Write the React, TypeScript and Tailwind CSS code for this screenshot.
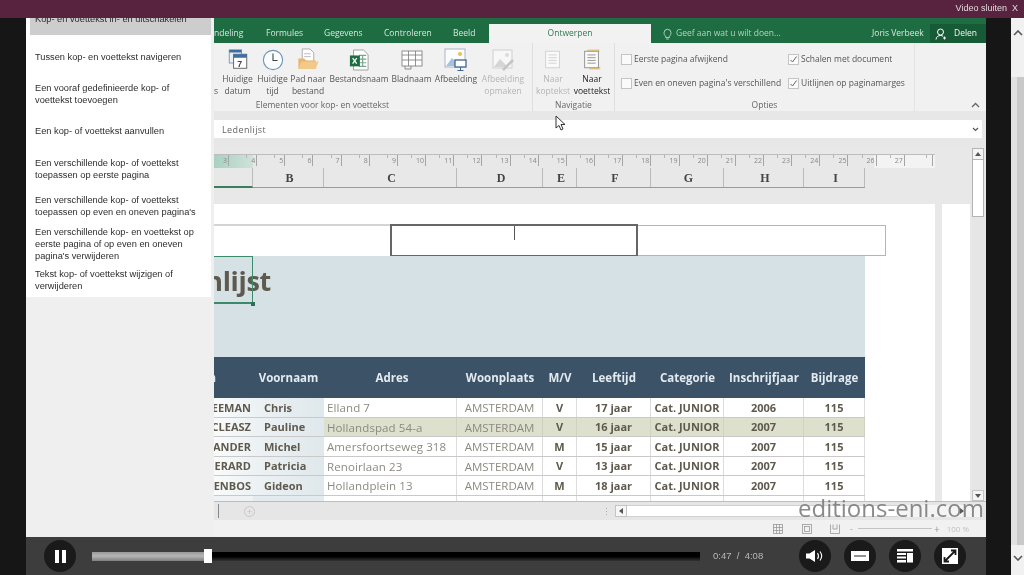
import React from "react";

const sidebarItems: { t: string[]; h: string; active?: boolean }[] = [
  { t: ["Kop- en voettekst in- en uitschakelen"], h: "h-[34px] -mt-[17px]", active: true },
  { t: ["Tussen kop- en voettekst navigeren"], h: "h-[42px]" },
  { t: ["Een vooraf gedefinieerde kop- of", "voettekst toevoegen"], h: "h-[32px]" },
  { t: ["Een kop- of voettekst aanvullen"], h: "h-[42px]" },
  { t: ["Een verschillende kop- of voettekst", "toepassen op eerste pagina"], h: "h-[34px]" },
  { t: ["Een verschillende kop- of voettekst", "toepassen op even en oneven pagina's"], h: "h-[40px]" },
  { t: ["Een verschillende kop- en voettekst op", "eerste pagina of op even en oneven", "pagina's verwijderen"], h: "h-[36px]" },
  { t: ["Tekst kop- of voettekst wijzigen of", "verwijderen"], h: "h-[36px]" },
];

const cols = [
  ["B", "w-[71px]"],
  ["C", "w-[133px]"],
  ["D", "w-[86px]"],
  ["E", "w-[34px]"],
  ["F", "w-[74px]"],
  ["G", "w-[73px]"],
  ["H", "w-[80px]"],
  ["I", "w-[61px]"],
];

const rows = [
  ["VREEMAN", "Chris", "Elland 7", "V", "17 jaar", "2006"],
  ["NICLEASZ", "Pauline", "Hollandspad 54-a", "V", "16 jaar", "2007"],
  ["VANDER", "Michel", "Amersfoortseweg 318", "M", "15 jaar", "2007"],
  ["GERARD", "Patricia", "Renoirlaan 23", "V", "13 jaar", "2007"],
  ["RIJENBOS", "Gideon", "Hollandplein 13", "M", "18 jaar", "2007"],
];

const grid = "grid grid-cols-[39px_71px_133px_86px_34px_74px_73px_80px_61px]";
const rulerNums = [3,4,5,6,7,8,9,10,11,12,13,14,15,16,17,18,19,20,21,22,23,24,25,26,27,0];

function Doc({ color, accent }: { color: string; accent?: string }) {
  return (
    <svg width="22" height="23" viewBox="0 0 24 24" fill="none">
      {accent && <path d="M7 1h13v3h-13zM9 20h12v3h-12z" fill={accent} />}
      <rect x="4" y="3" width="15" height="18" fill="#fafafa" stroke={color} />
      <path d="M7 7h9M7 10h9M7 13h9M7 16h9" stroke={color} />
    </svg>
  );
}

function Ribbon({ w, l, icon, dim, bold }: { w: string; l: string[]; icon: React.ReactNode; dim?: boolean; bold?: boolean }) {
  return (
    <div className={`${w} flex flex-col items-center shrink-0`}>
      <div className="h-[25px] w-full flex items-center justify-center">{icon}</div>
      <div className={`mt-[1px] text-center leading-[12px] text-[8.5px] whitespace-nowrap ${dim ? "text-[#b5b5b5]" : bold ? "text-[#222]" : "text-[#555]"}`}>
        {l.map((x) => (<div key={x}>{x}</div>))}
      </div>
    </div>
  );
}

function Check({ on, label, w }: { on?: boolean; label: string; w: string }) {
  return (
    <div className={`${w} flex items-center gap-[2px] h-[12px]`}>
      <div className="w-[11px] h-[11px] border border-[#c4c4c4] bg-[#fafafa] flex items-center justify-center shrink-0">
        {on && (
          <svg width="9" height="9" viewBox="0 0 9 9" fill="none"><path d="M1.5 5l2 2 4-5.5" stroke="#666" /></svg>
        )}
      </div>
      <span className="text-[8.5px] text-[#555] whitespace-nowrap">{label}</span>
    </div>
  );
}

function Round({ children }: { children: React.ReactNode }) {
  return (
    <div className="w-[32px] h-[32px] rounded-full bg-[#1a1a1a] flex items-center justify-center shrink-0">{children}</div>
  );
}

export default function App() {
  return (
    <div className="relative w-[1024px] h-[575px] overflow-hidden flex flex-col bg-[#161616] font-['Open_Sans',sans-serif] blur-[0.35px]">
      {/* top bar */}
      <div className="h-[18px] shrink-0 bg-[#57233f] flex items-center justify-end pr-[6px] z-10">
        <span className="text-[9px] text-[#e4d8de] font-['Liberation_Sans',sans-serif]">Video sluiten&nbsp; X</span>
      </div>

      <div className="flex flex-1 min-h-0">
        <div className="w-[26px] shrink-0" />
        <div className="w-[960px] shrink-0 flex flex-col">
          <div className="h-[519px] flex bg-[#efefef] relative">
            {/* sidebar */}
            <div className="w-[188px] shrink-0 flex flex-col">
              <div className="h-[279px] w-[185px] bg-white pl-[4px] flex flex-col font-['Liberation_Sans',sans-serif] overflow-hidden">
                {sidebarItems.map((s) => (
                  <div key={s.t[0]} className={`${s.h} shrink-0 pl-[5px] pt-[1px] flex flex-col justify-center text-[9.25px] leading-[12px] text-[#2d2d2d] ${s.active ? "bg-[#cdcdcd]" : ""}`}>
                    {s.t.map((x) => (<div key={x} className="whitespace-nowrap">{x}</div>))}
                  </div>
                ))}
              </div>
            </div>

            {/* excel */}
            <div className="w-[772px] shrink-0 flex flex-col">
              {/* tabs */}
              <div className="h-[25px] shrink-0 bg-[#1e6d42] flex text-[8.5px] text-[#d6e6dc]">
                <div className="flex items-center pt-[6px] h-full w-[275px] shrink-0">
                  <span className="w-[30px]">ndeling</span>
                  <span className="ml-[22px] w-[37px]">Formules</span>
                  <span className="ml-[21px] w-[39px]">Gegevens</span>
                  <span className="ml-[21px] w-[47px]">Controleren</span>
                  <span className="ml-[22px]">Beeld</span>
                </div>
                <div className="w-[162px] mt-[6px] h-[19px] bg-[#f2f2f2] shrink-0 flex items-center justify-center text-[#2f7a55]">Ontwerpen</div>
                <div className="flex-1 flex items-center pt-[6px] pl-[12px]">
                  <svg width="9" height="12" viewBox="0 0 9 12" fill="none" stroke="#b9d6c6" strokeWidth="0.9"><path d="M2.6 8.2C1.6 7.2 1 6.3 1 4.8a3.5 3.5 0 0 1 7 0c0 1.5-.6 2.4-1.600 3.400v1.300H2.600zM3.200 11h2.600" /></svg>
                  <span className="ml-[4px] text-[#b4d2c1] w-[196px]">Geef aan wat u wilt doen...</span>
                  <span className="w-[58px] text-[#d8e7de]">Joris Verbeek</span>
                  <div className="w-[56px] h-[19px] bg-[#175a36] flex items-center pl-[5px] text-[#f1f6f3]">
                    <svg width="12" height="12" viewBox="0 0 12 12" fill="none" stroke="#fff" strokeWidth="1"><circle cx="5.5" cy="4" r="3" /><path d="M1 11.500c.3-2.600 2-4 4.500-4 1 0 2 .3 2.600.8M9.500 8.500v3M8 10h3" /></svg>
                    <span className="ml-[7px]">Delen</span>
                  </div>
                </div>
              </div>

              {/* ribbon */}
              <div className="h-[68px] shrink-0 bg-[#f1f1f1] flex relative">
                <div className="w-[319px] shrink-0 flex flex-col border-r border-[#dfdfdf]">
                  <div className="flex h-[56px] pt-[4px]">
                    <div className="w-[6px] text-[8.5px] text-[#555] pt-[38px] leading-[12px] shrink-0">s</div>
                    <Ribbon w="w-[35px]" l={["Huidige", "datum"]} icon={
                      <svg width="20" height="21" viewBox="0 0 22 24" fill="none"><rect x="1" y="1" width="14" height="15" fill="#e9eef4" stroke="#7b93ac" /><rect x="1" y="1" width="14" height="3" fill="#3f6f9f" /><rect x="6" y="6" width="15" height="16" fill="#fff" stroke="#555" /><rect x="6" y="6" width="15" height="4" fill="#3f6f9f" /><text x="10" y="20" fontSize="10" fontWeight="700" fill="#444" fontFamily="Liberation Sans">7</text></svg>
                    } />
                    <Ribbon w="w-[35px]" l={["Huidige", "tijd"]} icon={
                      <svg width="22" height="22" viewBox="0 0 24 24" fill="none"><circle cx="12" cy="12" r="10.500" fill="#fbfcfd" stroke="#6f93b5" strokeWidth="1.200" /><path d="M12 5v7.500h5" stroke="#444" strokeWidth="1.200" /></svg>
                    } />
                    <Ribbon w="w-[36px]" l={["Pad naar", "bestand"]} icon={
                      <svg width="24" height="23" viewBox="0 0 24 24" fill="none"><path d="M6 1h8l4 4v9H6z" fill="#fff" stroke="#aaa" /><path d="M8 6h7M8 9h7" stroke="#bbb" /><path d="M2 11h6l2 2h10v9H2z" fill="#e8b468" /><path d="M2 22l3-8h18l-3 8z" fill="#f3c98a" /></svg>
                    } />
                    <Ribbon w="w-[66px]" l={["Bestandsnaam"]} icon={
                      <svg width="20" height="22" viewBox="0 0 22 24" fill="none"><path d="M5 1h11l5 5v17H5z" fill="#fff" stroke="#999" /><path d="M11 7h8M11 11h8M11 15h8M11 19h8M15 7v12" stroke="#7aa68c" strokeWidth="1.300" /><rect x="1" y="7" width="11" height="12" fill="#1d6f42" /><path d="M4 10l4.500 6M8.500 10L4 16" stroke="#fff" strokeWidth="1.400" /></svg>
                    } />
                    <Ribbon w="w-[39px]" l={["Bladnaam"]} icon={
                      <svg width="22" height="20" viewBox="0 0 22 20" fill="none" stroke="#777" strokeWidth="0.8"><rect x="1" y="1" width="20" height="15" fill="#fff" /><path d="M1 5h20M1 10h20M7.500 1v15M14.500 1v15M4 16v3h6v-3" /></svg>
                    } />
                    <Ribbon w="w-[50px]" l={["Afbeelding"]} icon={
                      <svg width="24" height="24" viewBox="0 0 24 24" fill="none"><rect x="1" y="1" width="20" height="18" fill="#fafcff" stroke="#a9b6c2" /><circle cx="16" cy="6" r="2" fill="#efbb52" /><path d="M2 18l6-8 5 5 1 3z" fill="#a6c2de" /><rect x="11" y="12" width="11" height="7" fill="#fff" stroke="#41678c" strokeWidth="1.300" /><path d="M16.500 19v3M13.500 22.500h6" stroke="#41678c" /></svg>
                    } />
                    <Ribbon w="w-[44px]" dim l={["Afbeelding", "opmaken"]} icon={
                      <svg width="24" height="24" viewBox="0 0 24 24" fill="none"><rect x="2" y="2" width="19" height="18" fill="#f7f7f7" stroke="#cfcfcf" /><path d="M3 19l6-8 5 5 2 3z" fill="#d5d5d5" /><circle cx="16" cy="7" r="2" fill="#dcdcdc" /><path d="M12 22l10-10" stroke="#c4c4c4" strokeWidth="2.500" /></svg>
                    } />
                  </div>
                  <div className="w-[217px] text-center text-[8.5px] leading-[12px] text-[#666]">Elementen voor kop- en voettekst</div>
                </div>
                <div className="w-[82px] shrink-0 flex flex-col border-r border-[#dfdfdf]">
                  <div className="flex h-[56px] pt-[4px] pl-[1px]">
                    <Ribbon w="w-[38px]" dim l={["Naar", "koptekst"]} icon={<Doc color="#d0d0d0" />} />
                    <Ribbon w="w-[40px]" bold l={["Naar", "voettekst"]} icon={<Doc color="#8f8f8f" accent="#eec97a" />} />
                  </div>
                  <div className="text-center text-[8.5px] leading-[12px] text-[#666]">Navigatie</div>
                </div>
                <div className="w-[300px] shrink-0 flex flex-col border-r border-[#e3e3e3]">
                  <div className="h-[56px] pt-[10px] pl-[6px] flex flex-col gap-[12px]">
                    <div className="flex"><Check label="Eerste pagina afwijkend" w="w-[167px]" /><Check on label="Schalen met document" w="w-[120px]" /></div>
                    <div className="flex"><Check label="Even en oneven pagina's verschillend" w="w-[167px]" /><Check on label="Uitlijnen op paginamarges" w="w-[120px]" /></div>
                  </div>
                  <div className="text-center text-[8.5px] leading-[12px] text-[#666]">Opties</div>
                </div>
                <div className="flex-1 flex items-end justify-end pr-[6px] pb-[2px]">
                  <svg width="9" height="7" viewBox="0 0 9 7" fill="none" stroke="#666" strokeWidth="1.300"><path d="M1 5l3.500-3.500L8 5" /></svg>
                </div>
              </div>

              {/* formula bar */}
              <div className="h-[37px] shrink-0 bg-[#e7e7e7] pt-[9px] pr-[4px]">
                <div className="h-[18px] bg-white flex items-center pl-[8px] pr-[3px] pt-[1px] justify-between text-[9px] tracking-[0.4px] text-[#666]">
                  <span>Ledenlijst</span>
                  <svg width="7" height="5" viewBox="0 0 7 5" fill="none" stroke="#555" strokeWidth="1.200"><path d="M1 1l2.500 2.500L6 1" /></svg>
                </div>
              </div>

              {/* sheet */}
              <div className="h-[353px] shrink-0 flex bg-[#e8e8e8] overflow-hidden">
                <div className="w-[758px] shrink-0 flex flex-col">
                  <div className="h-[6px] shrink-0" />
                  {/* ruler */}
                  <div className="h-[14px] w-[721px] shrink-0 flex border-t border-[#bdbdbd] bg-[linear-gradient(90deg,#a9d0c0_0,#cfe2da_39px,#e8e8e8_39px,#e8e8e8_660px,#f3f3f3_660px)] overflow-hidden">
                    {rulerNums.map((n, i) => (
                      <div key={i} className={`${i === 0 ? "w-[15px]" : "w-[28.17px]"} shrink-0 flex justify-end items-start text-[7px] leading-[12px] text-[#888]`}>
                        {i > 0 && <div className="w-[1px] h-[3px] bg-[#b5b5b5] mr-[4px]" />}
                        <span className="pr-[1px]">{n || ""}</span>
                        <div className="w-[1px] h-[11px] bg-[#a5a5a5]" />
                      </div>
                    ))}
                  </div>
                  {/* column headers */}
                  <div className="h-[20px] shrink-0 flex font-['Liberation_Serif',serif] font-bold text-[12px] text-[#444] w-[651px] border-b border-[#9a9a9a]">
                    <div className="w-[39px] border-b-2 border-[#3d7d5f] -mb-[1px] border-r border-r-[#bbb]" />
                    {cols.map(([c, w]) => (
                      <div key={c} className={`${w} flex items-center justify-center pl-[3px] border-r border-[#bbb]`}>{c}</div>
                    ))}
                  </div>
                  <div className="h-[16px] shrink-0" />
                  {/* page */}
                  <div className="flex flex-1 min-h-0">
                    <div className="w-[721px] shrink-0 bg-white flex flex-col overflow-hidden">
                      <div className="h-[20px] shrink-0" />
                      <div className="h-[32px] shrink-0 flex bg-white">
                        <div className="w-[176px] shrink-0 border-t-2 border-[#d4d4d4]" />
                        <div className="w-[248px] shrink-0 border-2 border-[#666] border-b-1 flex justify-center">
                          <div className="w-[1px] h-[14px] bg-[#555]" />
                        </div>
                        <div className="w-[248px] shrink-0 border border-l-0 border-[#b5b5b5] mt-[1px]" />
                      </div>
                      {/* band */}
                      <div className="w-[651px] h-[101px] shrink-0 bg-[#d6e1e6] relative overflow-hidden flex">
                        <div className="w-[57px] h-[50px] overflow-hidden flex justify-end items-center">
                          <span className="text-[27px] font-bold text-[#5f5a4e] whitespace-nowrap tracking-[-0.3px]">Ledenlijst</span>
                        </div>
                        <div className="absolute left-0 top-0 w-[39px] h-[48px] border border-l-0 border-[#3c8a6a] border-b-2" />
                        <div className="absolute left-[37px] top-[46px] w-[4px] h-[4px] bg-[#2f6f55]" />
                      </div>
                      {/* table */}
                      <div className={`${grid} w-[651px] h-[41px] shrink-0 bg-[#3c5267] text-[#e3eaf0] font-bold text-[11.5px] items-center text-center`}>
                        <div className="overflow-hidden flex justify-end pr-[37px]"><span>n</span></div>
                        <div className="whitespace-nowrap">Voornaam</div>
                        <div className="pl-[3px]">Adres</div>
                        <div className="whitespace-nowrap">Woonplaats</div>
                        <div>M/V</div>
                        <div>Leeftijd</div>
                        <div>Categorie</div>
                        <div className="whitespace-nowrap">Inschrijfjaar</div>
                        <div>Bijdrage</div>
                      </div>
                      {rows.map((r, i) => {
                        const hl = i === 1;
                        const cell = `h-full flex items-center justify-center pt-[1px] border-r ${hl ? "border-[#cfd2c0]" : "border-[#dcdcdc]"}`;
                        return (
                          <div key={r[0]} className={`${grid} w-[651px] h-[19.5px] shrink-0 text-[11px] border-b border-[#c9c9c9] ${hl ? "bg-[#dde0cd]" : "bg-white"}`}>
                            <div className="h-full overflow-hidden flex justify-end items-center pt-[1px] font-bold text-[#5f5a4e] bg-[linear-gradient(90deg,#fafbfb,#edf2f4)] pr-[2px]">
                              <span className="whitespace-nowrap">{r[0]}</span>
                            </div>
                            <div className="h-full flex items-center pl-[11px] pt-[1px] font-bold text-[#5f5a4e] bg-[linear-gradient(90deg,#edf2f4,#dfe8ec)]">{r[1]}</div>
                            <div className={`h-full flex items-center pl-[3px] pt-[1px] text-[11.5px] tracking-[0.1px] text-[#8c8a80] border-r whitespace-nowrap ${hl ? "border-[#cfd2c0]" : "border-[#dcdcdc]"}`}>{r[2]}</div>
                            <div className={`${cell} text-[#8c8a80] text-[11.5px]`}>AMSTERDAM</div>
                            <div className={`${cell} font-bold text-[#5f5a4e]`}>{r[3]}</div>
                            <div className={`${cell} font-bold text-[#5f5a4e]`}>{r[4]}</div>
                            <div className={`${cell} font-bold text-[#5f5a4e] whitespace-nowrap`}>Cat. JUNIOR</div>
                            <div className={`${cell} font-bold text-[#5f5a4e]`}>{r[5]}</div>
                            <div className={`${cell} font-bold text-[#5f5a4e]`}>115</div>
                          </div>
                        );
                      })}
                      <div className={`${grid} w-[651px] flex-1 bg-white`}>
                        <div className="bg-[#eef2f4]" />
                        <div className="bg-[#e3ebee]" />
                        <div className="border-r border-[#dcdcdc]" />
                        <div className="border-r border-[#dcdcdc]" />
                        <div className="border-r border-[#dcdcdc]" />
                        <div className="border-r border-[#dcdcdc]" />
                        <div className="border-r border-[#dcdcdc]" />
                        <div className="border-r border-[#dcdcdc]" />
                        <div className="border-r border-[#dcdcdc]" />
                      </div>
                    </div>
                    <div className="w-[7px] shrink-0" />
                    <div className="w-[28px] shrink-0 bg-white" />
                  </div>
                </div>
                {/* vertical scrollbar */}
                <div className="w-[12px] shrink-0 flex flex-col bg-[#e6e6e6]">
                  <div className="h-[12px] bg-[#f4f4f4] border border-[#b4b4b4] flex items-center justify-center">
                    <svg width="6" height="4" viewBox="0 0 6 4"><path d="M3 0l3 4H0z" fill="#555" /></svg>
                  </div>
                  <div className="h-[57px] bg-white border border-t-0 border-[#b4b4b4]" />
                  <div className="flex-1" />
                  <div className="h-[11px] bg-[#f4f4f4] border border-[#c4c4c4] flex items-center justify-center">
                    <svg width="6" height="4" viewBox="0 0 6 4"><path d="M3 4l3-4H0z" fill="#555" /></svg>
                  </div>
                </div>
              </div>

              {/* sheet tabs strip */}
              <div className="h-[19px] shrink-0 bg-[#e6e6e6] border-t border-[#bdbdbd] flex items-center">
                <div className="ml-[4px] w-[1px] h-[14px] bg-[#888]" />
                <div className="ml-[25px] w-[11px] h-[11px] rounded-full border border-[#c8c8c8] flex items-center justify-center text-[#c0c0c0] text-[9px] leading-none">+</div>
                <div className="ml-[347px] w-[4px] text-[#aaa] text-[9px] leading-none">⋮</div>
                <div className="ml-[9px] w-[12px] h-[12px] bg-[#f6f6f6] border border-[#c4c4c4] flex items-center justify-center shrink-0">
                  <svg width="4" height="6" viewBox="0 0 4 6"><path d="M0 3l4-3v6z" fill="#555" /></svg>
                </div>
                <div className="w-[271px] h-[12px] bg-white border-y border-[#d0d0d0]" />
                <div className="flex-1 h-[12px] bg-[#f4f4f4] flex items-center justify-end pr-[18px]">
                  <svg width="4" height="6" viewBox="0 0 4 6"><path d="M4 3L0 0v6z" fill="#555" /></svg>
                </div>
                <div className="w-[4px]" />
              </div>

              {/* status bar */}
              <div className="h-[17px] shrink-0 bg-[#f1f1f1] flex items-center pl-[559px]">
                <svg width="10" height="10" viewBox="0 0 10 10" fill="none" stroke="#999" strokeWidth="0.800"><rect x="0.500" y="0.500" width="9" height="9" /><path d="M0 3.500h10M0 6.500h10M3.500 0v10M6.500 0v10" /></svg>
                <svg className="ml-[19px]" width="10" height="10" viewBox="0 0 10 10" fill="none" stroke="#999" strokeWidth="0.800"><rect x="0.500" y="0.500" width="9" height="9" /><rect x="2.500" y="2.500" width="5" height="5" /></svg>
                <svg className="ml-[18px]" width="10" height="10" viewBox="0 0 10 10" fill="none" stroke="#999" strokeWidth="0.800"><path d="M.5.500v9h9v-9M3 .5v4.500h4V.5" /></svg>
                <span className="ml-[10px] w-[2px] text-[9px] text-[#aaa] leading-none">-</span>
                <div className="ml-[6px] w-[74px] h-[1px] bg-[#c4c4c4]" />
                <span className="ml-[2px] text-[10px] text-[#999] leading-none">+</span>
                <span className="ml-[7px] text-[8px] text-[#c2c2c2] whitespace-nowrap">100 %</span>
              </div>
              <div className="flex-1" />
            </div>

            {/* mouse cursor */}
            <svg className="absolute left-[529px] top-[97px]" width="12" height="17" viewBox="0 0 12 17" fill="#fff" stroke="#333" strokeWidth="1"><path d="M1 1v12l3-2.500 2 4.500 2-1-2-4.500h4z" /></svg>
          </div>

          {/* player controls */}
          <div className="h-[38px] shrink-0 bg-[#3d3d3d] flex items-center pl-[18px] font-['Liberation_Sans',sans-serif]">
            <Round>
              <div className="flex gap-[3px]"><div className="w-[4px] h-[13px] bg-white" /><div className="w-[4px] h-[13px] bg-white" /></div>
            </Round>
            <div className="ml-[16px] w-[608px] h-[9px] bg-[linear-gradient(#000,#000_50%,#333)] flex items-center shrink-0">
              <div className="w-[112px] h-full bg-[linear-gradient(#9a9a9a,#b5b5b5_45%,#7f7f7f)]" />
              <div className="w-[8px] h-[14px] bg-white" />
            </div>
            <div className="ml-[13px] w-[50px] shrink-0 text-[9.5px] text-[#b9b9b9] whitespace-nowrap">0:47&nbsp; /&nbsp; 4:08</div>
            <div className="ml-[36px] flex gap-[13px]">
              <Round>
                <svg width="20" height="14" viewBox="0 0 20 14" fill="none"><path d="M1 4.500h3.500L10 1v12L4.500 9.500H1z" fill="#fff" /><path d="M12.500 4c1.200 1.800 1.200 4.200 0 6M15 2.500c2 2.700 2 6.300 0 9" stroke="#fff" strokeWidth="1.100" /></svg>
              </Round>
              <Round>
                <svg width="18" height="10" viewBox="0 0 18 10"><path d="M0 0h18v10H0z" fill="#fff" /><path d="M3 5h12" stroke="#555" strokeWidth="1.300" /></svg>
              </Round>
              <Round>
                <svg width="16" height="14" viewBox="0 0 16 14" fill="#fff"><path d="M0 0h16v2.500H0zM0 4h9v2H0zM0 7.500h9v2H0zM0 11h9v2.500H0zM10 4h6v9.500h-6z" /></svg>
              </Round>
              <Round>
                <svg width="18" height="18" viewBox="0 0 18 18"><path d="M1 1h16v16H1z" fill="#fff" /><path d="M4 14L14 4M10 3.500h4.500V8M8 14.500H3.500V10" stroke="#1a1a1a" strokeWidth="1.800" fill="none" /></svg>
              </Round>
            </div>
          </div>
        </div>
        <div className="w-[25px] shrink-0" />
        {/* page scrollbar */}
        <div className="w-[13px] shrink-0 flex flex-col">
          <div className="h-[59px] shrink-0 bg-[#f1f1f1] flex justify-center pt-[12px]">
            <svg width="10" height="6" viewBox="0 0 10 6" fill="none" stroke="#555" strokeWidth="1.600"><path d="M1 5l4-4 4 4" /></svg>
          </div>
          <div className="flex-1 bg-[linear-gradient(90deg,#e2e2e2_50%,#c9c9c9_50%)]" />
          <div className="h-[30px] shrink-0 bg-[#f1f1f1] flex justify-center pt-[10px]">
            <svg width="10" height="6" viewBox="0 0 10 6" fill="none" stroke="#555" strokeWidth="1.600"><path d="M1 1l4 4 4-4" /></svg>
          </div>
        </div>
      </div>

      {/* watermark */}
      <div className="absolute left-[798px] top-[492px] text-[24px] leading-[32px] text-[#767676]/85 font-['Open_Sans',sans-serif] whitespace-nowrap">editions-eni.com</div>
    </div>
  );
}
